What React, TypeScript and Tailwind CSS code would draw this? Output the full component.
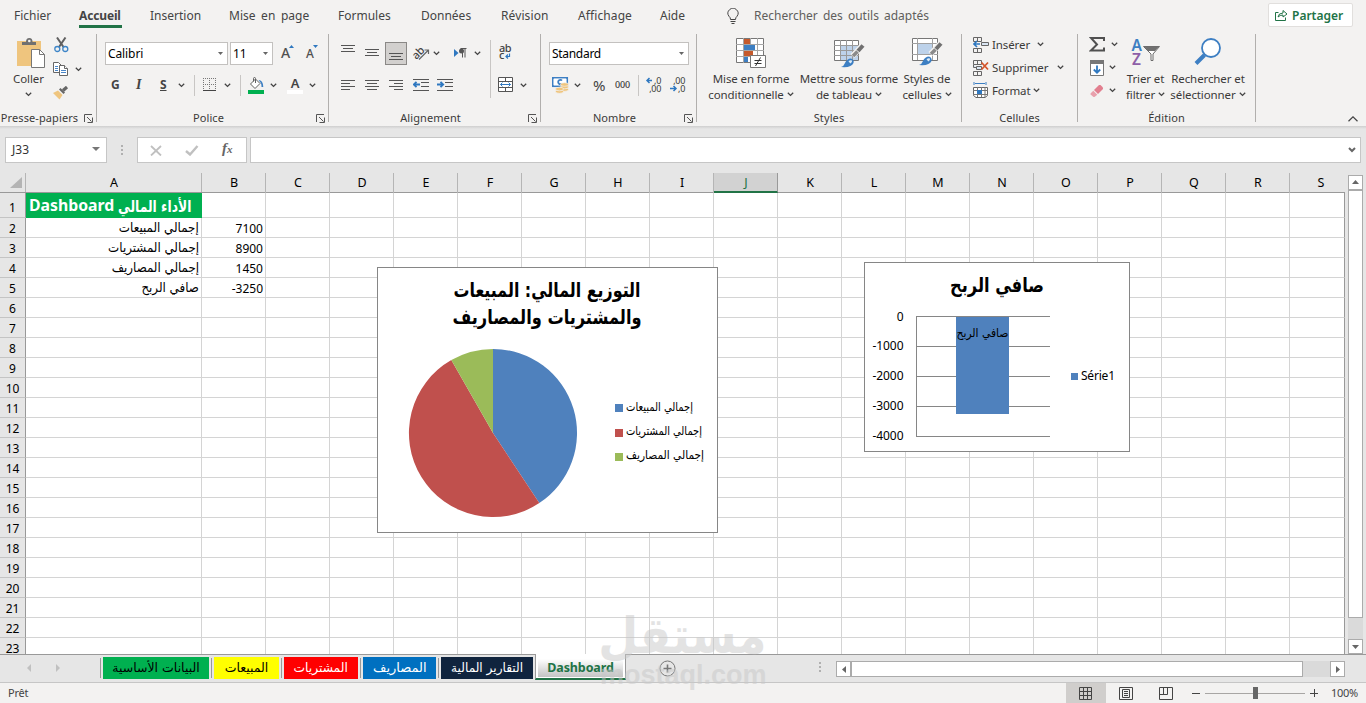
import type { ReactNode } from 'react';

const TABS = [
  { t: 'Insertion', c: 'w-[79px]' },
  { t: 'Mise en page', c: 'w-[109px] [word-spacing:2.5px]' },
  { t: 'Formules', c: 'w-[83px]' },
  { t: 'Données', c: 'w-[80px]' },
  { t: 'Révision', c: 'w-[77px] tracking-[0.1px]' },
  { t: 'Affichage', c: 'w-[82px] tracking-[0.1px]' },
  { t: 'Aide', c: 'w-[67px]' },
];

const COLS = ['B', 'C', 'D', 'E', 'F', 'G', 'H', 'I', 'J', 'K', 'L', 'M', 'N', 'O', 'P', 'Q', 'R', 'S'];

const ROWS = [
  { label: 'إجمالي المبيعات', value: '7100' },
  { label: 'إجمالي المشتريات', value: '8900' },
  { label: 'إجمالي المصاريف', value: '1450' },
  { label: 'صافي الربح', value: '-3250' },
];

const SHEETS = [
  { t: 'البيانات الأساسية', c: 'w-[106px] bg-[#00b050] text-black', s: '' },
  { t: 'المبيعات', c: 'w-[65px] bg-[#ffff00] text-black', s: '' },
  { t: 'المشتريات', c: 'w-[74px] bg-[#ff0000] text-white', s: 'scale-x-[0.98]' },
  { t: 'المصاريف', c: 'w-[73px] bg-[#0070c0] text-white', s: 'scale-x-[1.04]' },
  { t: 'التقارير المالية', c: 'w-[92px] bg-[#10243e] text-white', s: 'scale-x-[0.97]' },
];

function Chevron({ c = '' }: { c?: string }) {
  return (
    <svg className={`shrink-0 ${c}`} width="7" height="5" viewBox="0 0 7 5" fill="none" stroke="#444" strokeWidth="1.3">
      <path d="M0.8 0.8 3.5 3.4 6.2 0.8" />
    </svg>
  );
}

function Caret({ c = '' }: { c?: string }) {
  return (
    <svg className={`shrink-0 ${c}`} width="5" height="3" viewBox="0 0 5 3">
      <path d="M0 0H5L2.5 3Z" fill="#666" />
    </svg>
  );
}

function Launcher({ c = '' }: { c?: string }) {
  return (
    <svg className={`shrink-0 ${c}`} width="9" height="9" viewBox="0 0 9 9" fill="none" stroke="#555">
      <path d="M0.5 8V0.5H8M3 3 7.5 7.5M8.5 3.5V8.5H3.5" />
    </svg>
  );
}

function Sep() {
  return <div className="mt-[2px] h-[88px] w-px shrink-0 bg-[#b1afad]" />;
}

function Group({ label, width, launcher, children }: { label: string; width: string; launcher?: string; children: ReactNode }) {
  return (
    <div className={`flex shrink-0 flex-col ${width}`}>
      <div className="h-[78px]">{children}</div>
      <div className="flex h-4 items-center text-[11px] tracking-[0.1px]">
        <span className={`flex-1 whitespace-nowrap text-center ${launcher ? '-mr-[4px]' : ''}`}>{label}</span>
        {launcher && <Launcher c={launcher} />}
      </div>
    </div>
  );
}

function Lines({ xs, c = '' }: { xs: number[][]; c?: string }) {
  return (
    <svg className={`shrink-0 ${c}`} width="14" height="16" viewBox="0 0 14 16" stroke="#555" strokeWidth="1">
      {xs.map(([x1, x2, y], i) => (
        <path key={i} d={`M${x1} ${y + 0.5}H${x2}`} />
      ))}
    </svg>
  );
}

const LEFT = [[0, 14, 3], [0, 9, 6], [0, 14, 9], [0, 9, 12]];
const CENTER = [[0, 14, 3], [2, 12, 6], [0, 14, 9], [2, 12, 12]];
const RIGHT = [[0, 14, 3], [5, 14, 6], [0, 14, 9], [5, 14, 12]];
const THREE = [[0, 14, 3], [2, 12, 6], [0, 14, 9]];

function Indent({ out, c }: { out?: boolean; c: string }) {
  return (
    <svg className={`shrink-0 ${c}`} width="16" height="14" viewBox="0 0 16 14" fill="none" stroke="#555">
      <path d="M0 1.5H16M8 4.5H16M8 8.5H16M0 12.5H16" />
      <path d={out ? 'M7 6.5H1M3.5 3.8 0.8 6.5 3.5 9.2' : 'M0 6.5H6M3.5 3.8 6.2 6.5 3.5 9.2'} stroke="#2f78c0" strokeWidth="1.8" />
    </svg>
  );
}

function Clipboard() {
  return (
    <svg width="29" height="31" viewBox="0 0 29 31">
      <path d="M0 3H24V28H0Z" fill="#efc57e" />
      <path d="M5 7V4H9Q9 0 12.3 0T15.5 4H19V7Z" fill="#707070" />
      <circle cx="12.3" cy="3" r="1.3" fill="#f3f2f1" />
      <path d="M14.5 11.5H22.5L27.5 16.5V29.5H14.5Z" fill="#fff" stroke="#777" />
      <path d="M22.5 11.5V16.5H27.5" fill="none" stroke="#777" />
    </svg>
  );
}

function Scissors() {
  return (
    <svg width="15" height="16" viewBox="0 0 15 16" fill="none">
      <path d="M3 0.5 9.5 10M11.500 0.5 5 10" stroke="#606060" strokeWidth="2" />
      <circle cx="3.3" cy="12" r="2.5" stroke="#3d85c8" strokeWidth="1.3" />
      <circle cx="11.3" cy="12" r="2.5" stroke="#3d85c8" strokeWidth="1.3" />
    </svg>
  );
}

function Copy() {
  return (
    <svg width="15" height="14" viewBox="0 0 15 14" fill="#fff" stroke="#666">
      <path d="M0.5 0.5H5.5L8.5 3.5V10.5H0.5Z" />
      <path d="M2 4.5H5M2 6.5H5M2 8.5H5" stroke="#4a86c8" />
      <path d="M6.5 3.5H11.5L14.5 6.5V13.5H6.5Z" />
      <path d="M11.5 3.5V6.5H14.5" />
      <path d="M8 8.5H13M8 10.5H13" stroke="#4a86c8" />
    </svg>
  );
}

function Painter() {
  return (
    <svg width="16" height="14" viewBox="0 0 16 14">
      <path d="M0 7 5 4.5 9.5 9 6.5 13.5Z" fill="#efc57e" />
      <path d="M6 3.5 7.5 2 12 6.5 10.5 8Z" fill="#666" />
      <path d="M10 4.5 14 1" stroke="#666" strokeWidth="3.2" />
    </svg>
  );
}

function FontSize({ up, c }: { up?: boolean; c: string }) {
  return (
    <div className={`flex shrink-0 items-start font-medium text-[#505050] ${c}`}>
      <span className={up ? 'text-[14px] leading-[20px]' : 'text-[12px] leading-[21px]'}>A</span>
      <svg className="-ml-px mt-[2px]" width="5" height="4" viewBox="0 0 5 4">
        <path d={up ? 'M0 3H5L2.5 0Z' : 'M0 0H5L2.5 3Z'} fill="#2f78c0" />
      </svg>
    </div>
  );
}

function Bucket() {
  return (
    <svg width="16" height="17" viewBox="0 0 16 17">
      <path d="M2.5 7 7.5 2 12 6.5 7 11.5Z" fill="#fff" stroke="#606060" />
      <path d="M5.5 4.5V1.5Q5.5 0.5 6.5 0.5T7.5 1.5V6" fill="none" stroke="#606060" />
      <path d="M10.5 3Q15 3 15.3 10H13.5Q13.5 6 12 5Z" fill="#3d7fc3" />
      <path d="M0 13H16V17H0Z" fill="#00b050" />
    </svg>
  );
}

function BorderIcon() {
  return (
    <svg width="14" height="14" viewBox="0 0 14 14" fill="none" stroke="#777">
      <path d="M0.5 0V12M6.5 0V12M12.5 0V12M0 0.5H13M0 6.5H13" strokeDasharray="1 1" />
      <path d="M0 12.5H13" stroke="#444" />
    </svg>
  );
}

function Money() {
  return (
    <svg width="17" height="17" viewBox="0 0 17 17">
      <rect x="0.7" y="0.7" width="14.6" height="8.6" fill="#fff" stroke="#3d7fc3" strokeWidth="1.5" />
      <path d="M0 0H3L0 3ZM16 0H13L16 3ZM0 10H3L0 7Z" fill="#3d7fc3" />
      <path d="M10 3.500A2.200 2.200 0 1 0 10 6.500" fill="none" stroke="#3d7fc3" strokeWidth="1.800" />
      <g fill="#efc57e" stroke="#f3f2f1" strokeWidth="0.7">
        <ellipse cx="12.5" cy="12.5" rx="4" ry="1.8" />
        <ellipse cx="12.5" cy="10" rx="4" ry="1.8" />
        <ellipse cx="12.5" cy="7.5" rx="4" ry="1.8" />
        <ellipse cx="7.5" cy="14.5" rx="4" ry="1.8" />
        <ellipse cx="7.5" cy="12" rx="4" ry="1.8" />
      </g>
    </svg>
  );
}

function Decimals({ less }: { less?: boolean }) {
  return (
    <svg className="shrink-0 overflow-visible" width="15" height="16" viewBox="0 0 15 16">
      <g fontSize="9" fill="#3b3a39" textAnchor="end" letterSpacing="-0.3">
        <text x="15" y="7">{less ? ',00' : ',0'}</text>
        <text x="15" y="15">{less ? ',0' : ',00'}</text>
      </g>
      <path
        transform={less ? 'translate(0 8)' : undefined}
        d={less ? 'M0 3.5H6M3.5 1 6 3.5 3.5 6' : 'M6 3.5H1M3.5 1 1 3.5 3.5 6'}
        fill="none"
        stroke="#2f78c0"
        strokeWidth="1.5"
      />
    </svg>
  );
}

function Brush() {
  return (
    <g>
      <path d="M29 7 18.5 18" stroke="#f3f2f1" strokeWidth="5.5" />
      <path d="M29 7.5 24 13" stroke="#707070" strokeWidth="4" />
      <path d="M23.5 13.5 19 18" stroke="#8a8a8a" strokeWidth="3.6" />
      <path d="M7 29Q10 28 11 25 13 20.5 17 20.5 20.5 22 19.5 25 17.5 30 7 29Z" fill="#3d7fc3" />
      <path d="M14.5 23.5Q16 21.5 18 22.5 18.5 24 16.5 25.5Z" fill="#dcebf7" />
    </g>
  );
}

function Conditional() {
  return (
    <svg width="31" height="31" viewBox="0 0 31 31">
      <path d="M0.5 0.5H27.5V24.5H0.5Z" fill="#fff" stroke="#777" />
      <path d="M0 6.5H28M0 12.5H28M0 18.5H28M7.5 0V25M14.5 0V25M21.5 0V25" stroke="#a6a6a6" />
      <path d="M8 1H14V6H8ZM8 13H17V18H8Z" fill="#c55a2c" />
      <path d="M8 7H19V12H8ZM8 19H12V24H8Z" fill="#3d7fc3" />
      <path d="M14.5 17.5H29.5V29.5H14.5Z" fill="#fff" stroke="#777" />
      <path d="M18.5 22.5H25.5M18.5 25.5H25.5M24.5 19.5 19.5 28" stroke="#333" />
    </svg>
  );
}

function TableStyle() {
  return (
    <svg width="31" height="31" viewBox="0 0 31 31">
      <path d="M0.5 2.5H24.5V22.5H0.5Z" fill="#fff" stroke="#777" />
      <path d="M6.5 8H24V22H6.5Z" fill="#bdd2ea" />
      <path d="M0 7.5H25M0 12.5H25M0 17.5H25M6.5 2V22M12.5 2V22M18.5 2V22" stroke="#999" />
      <Brush />
    </svg>
  );
}

function CellStyle() {
  return (
    <svg width="31" height="31" viewBox="0 0 31 31">
      <path d="M0.5 0.5H25.5V22.5H0.5Z" fill="#fff" stroke="#777" />
      <path d="M6 6H20V16H6Z" fill="#bdd2ea" />
      <path d="M0 5.5H26M0 16.5H26M5.5 0V22M20.5 0V22" stroke="#a0a0a0" />
      <g transform="translate(0 -2)">
        <Brush />
      </g>
    </svg>
  );
}

function CellIcon({ kind }: { kind: string }) {
  if (kind === 'format') {
    return (
      <svg width="16" height="17" viewBox="0 0 16 17" fill="none">
        <path d="M1 0V3M13 0V3M2 1.5H12" stroke="#3d7fc3" />
        <path d="M0.5 5.5H14.5V13.5L12 15.5H3L0.5 13.5Z" fill="#fff" stroke="#666" />
        <path d="M0 8.5H15M0 12.5H15M4.5 5V15M8.5 5V15M12 5V15" stroke="#777" />
        <path d="M4 8H9V12H4Z" fill="#2f78c0" />
      </svg>
    );
  }
  return (
    <svg width="16" height="16" viewBox="0 0 16 16" fill="none" stroke="#666">
      <path d="M0.5 4.5V0.5H8.5V4.5H0.5M4.5 0V4.5M0.5 11.5V15.5H8.5V11.5H0.5M4.5 11.5V15.5" />
      {kind === 'insert' ? (
        <>
          <path d="M8.5 5.5H15.5V8.5H8.5Z" fill="#d9e5f2" />
          <path d="M7 7H1M4 4 1 7 4 10" stroke="#2f78c0" strokeWidth="1.6" />
        </>
      ) : (
        <>
          <path d="M0.500 4.500V7.500H3.500M3.5 6.5H8.5V9.5H3.5Z" fill="#d9e5f2" />
          <path d="M8.5 2.5 15 9.5M15 2.5 8.5 9.5" stroke="#d4552b" strokeWidth="1.8" />
        </>
      )}
    </svg>
  );
}

function BigButton({ icon, l1, l2, c }: { icon: ReactNode; l1: string; l2: string; c: string }) {
  return (
    <div className={`flex shrink-0 flex-col items-center pt-[6px] ${c}`}>
      <div className="h-[32px]">{icon}</div>
      <div className="h-4 whitespace-nowrap leading-[17px]">{l1}</div>
      <div className="flex h-4 items-center gap-[3px] whitespace-nowrap leading-[17px]">
        {l2}
        <Chevron />
      </div>
    </div>
  );
}

function Ribbon() {
  return (
    <div className="flex h-[94px] text-[11.5px] leading-4 tracking-[-0.1px] text-[#3b3a39]">
      <Group label="Presse-papiers" width="w-[96px]" launcher="ml-[9px] mr-[3px]">
        <div className="flex">
          <div className="flex w-[53px] flex-col pt-[6px]">
            <div className="h-[33px] pl-[17px]"><Clipboard /></div>
            <div className="h-4 pl-[13px]">Coller</div>
            <Chevron c="ml-[25px] mt-[5px]" />
          </div>
          <div className="flex flex-col pt-[5px]">
            <div className="h-[25px] pl-px"><Scissors /></div>
            <div className="flex h-[24px] items-start"><Copy /><Chevron c="ml-[7px] mt-[5px]" /></div>
            <Painter />
          </div>
        </div>
      </Group>
      <Sep />
      <Group label="Police" width="w-[231px]" launcher="mr-[3px]">
        <div className="flex h-[33px] items-end pl-[8px]">
          <div className="flex h-[23px] w-[123px] items-center border border-[#c3c1bf] bg-white px-[2px] text-[12px] text-black">
            <span className="flex-1">Calibri</span><Caret c="mr-[2px]" />
          </div>
          <div className="ml-[2px] flex h-[23px] w-[43px] items-center border border-[#c3c1bf] bg-white px-[2px] text-[12px] text-black">
            <span className="flex-1">11</span><Caret c="mr-[2px]" />
          </div>
          <FontSize up c="ml-[8px] h-[22px] w-[25px]" />
          <FontSize c="h-[22px]" />
        </div>
        <div className="flex h-[40px] items-center pl-[14px] text-[12px] text-[#444]">
          <span className="w-[25px] font-bold">G</span>
          <span className="w-[24px] font-['Liberation_Serif',serif] text-[14px] font-bold italic">I</span>
          <span className="w-[18px] font-bold underline">S</span>
          <Chevron />
          <div className="ml-[9px] h-[21px] w-px bg-[#c8c6c4]" />
          <div className="ml-[8px]"><BorderIcon /></div>
          <Chevron c="ml-[7px]" />
          <div className="ml-[9px] h-[21px] w-px bg-[#c8c6c4]" />
          <div className="ml-[7px]"><Bucket /></div>
          <Chevron c="ml-[6px]" />
          <div className="ml-[10px] flex w-4 flex-col items-center text-[13px] font-semibold leading-[13px]">
            A<div className="h-[4px] w-4 bg-white" />
          </div>
          <Chevron c="ml-[6px]" />
        </div>
      </Group>
      <Sep />
      <Group label="Alignement" width="w-[211px]" launcher="mr-[3px]">
        <div className="flex">
          <div className="w-[161px]">
            <div className="flex h-[33px] items-end pl-[12px]">
              <Lines xs={THREE} c="mb-[7px]" />
              <Lines xs={THREE} c="ml-[10px] mb-[3px]" />
              <div className="ml-[6px] flex h-[23px] w-[22px] items-end justify-center border border-[#8a8886] bg-[#d2d0ce]"><Lines xs={THREE} c="-mb-[2px]" /></div>
              <svg className="mb-[4px] ml-[6px] shrink-0 overflow-visible" width="17" height="17" viewBox="0 0 17 17">
                <text x="-1" y="12" fontSize="11" fontWeight="500" fill="#444" transform="rotate(-45 6 9)">ab</text>
                <path d="M6 15.5 15 6.5M11.5 6H15.5V10" stroke="#666" strokeWidth="1.2" fill="none" />
              </svg>
              <Chevron c="mb-[9px] ml-[3px]" />
              <svg className="mb-[6px] ml-[14px] shrink-0" width="13" height="12" viewBox="0 0 13 12">
                <path d="M0 2 4.5 6 0 10Z" fill="#2f78c0" />
                <path d="M8.5 10.5V2M11 10.5V2M6.5 1.5H12.5" stroke="#555" fill="none" />
                <circle cx="7.5" cy="4" r="2.5" fill="#555" />
              </svg>
              <Chevron c="mb-[9px] ml-[7px]" />
            </div>
            <div className="flex h-[40px] items-center pl-[12px]">
              <Lines xs={LEFT} />
              <Lines xs={CENTER} c="ml-[10px]" />
              <Lines xs={RIGHT} c="ml-[10px]" />
              <Indent out c="ml-[10px]" />
              <Indent c="ml-[8px]" />
            </div>
          </div>
          <div className="mt-[8px] h-[58px] w-px bg-[#c8c6c4]" />
          <div className="pl-[7px] pt-[12px]">
            <svg className="mb-[17px] ml-px overflow-visible" width="14" height="16" viewBox="0 0 14 16">
              <g fontSize="11" fontWeight="500" fill="#444">
                <text x="0" y="7.5" textLength="12.500">ab</text>
                <text x="0" y="15">c</text>
              </g>
              <path d="M10.500 9.500V12.500H7.500M9 10.500 7 12.500 9 14.500" fill="none" stroke="#2f78c0" strokeWidth="1.2" />
            </svg>
            <div className="flex items-center">
              <svg width="16" height="16" viewBox="0 0 16 16" fill="#fff" stroke="#555">
                <path d="M0.5 0.5H14.5V14.5H0.5ZM0.5 4.5H14.5M0.5 10.5H14.5M7.5 0V4.5M7.5 10.5V15" />
                <path d="M2.5 7.5H12.5M4.5 5.5 2.5 7.5 4.5 9.5M10.5 5.5 12.5 7.5 10.5 9.5" stroke="#2f78c0" fill="none" />
              </svg>
              <Chevron c="ml-[6px]" />
            </div>
          </div>
        </div>
      </Group>
      <Sep />
      <Group label="Nombre" width="w-[155px]" launcher="mr-[3px]">
        <div className="flex h-[33px] items-end pl-[8px]">
          <div className="flex h-[23px] w-[140px] items-center border border-[#c3c1bf] bg-white px-[2px] text-[12px] text-black">
            <span className="flex-1 tracking-[-0.3px]">Standard</span><Caret c="mr-[2px]" />
          </div>
        </div>
        <div className="flex h-[40px] items-center pl-[11px]">
          <Money />
          <Chevron c="ml-[5px]" />
          <span className="ml-[12px] w-[22px] text-[15px] text-[#444]">%</span>
          <span className="w-[23px] text-[9px] font-medium">000</span>
          <div className="h-[21px] w-px bg-[#c8c6c4]" />
          <div className="ml-[7px] flex gap-[9px]"><Decimals /><Decimals less /></div>
        </div>
      </Group>
      <Sep />
      <Group label="Styles" width="w-[264px]">
        <div className="flex">
          <BigButton icon={<Conditional />} l1="Mise en forme" l2="conditionnelle" c="ml-[5px] w-[98px]" />
          <BigButton icon={<TableStyle />} l1="Mettre sous forme" l2="de tableau" c="w-[98px]" />
          <BigButton icon={<CellStyle />} l1="Styles de" l2="cellules" c="w-[58px]" />
        </div>
      </Group>
      <Sep />
      <Group label="Cellules" width="w-[115px]">
        <div className="flex flex-col pl-[11px] pt-px">
          <div className="flex h-[23px] items-center"><CellIcon kind="insert" /><span className="ml-[3px] w-[45px]">Insérer</span><Chevron /></div>
          <div className="flex h-[23px] items-center"><CellIcon kind="delete" /><span className="ml-[3px] w-[65px]">Supprimer</span><Chevron /></div>
          <div className="flex h-[23px] items-center"><CellIcon kind="format" /><span className="ml-[3px] w-[41px]">Format</span><Chevron /></div>
        </div>
      </Group>
      <Sep />
      <Group label="Édition" width="w-[177px]">
        <div className="flex">
          <div className="w-[45px] pl-[11px]">
            <div className="flex h-[24px] items-center">
              <svg width="16" height="15" viewBox="0 0 16 15" fill="none" stroke="#505050" strokeWidth="2">
                <path d="M15 4V1H2L8 7.5 2 13.5H15V10.5" />
              </svg>
              <Chevron c="ml-[6px]" />
            </div>
            <div className="flex h-[23px] items-center">
              <svg className="ml-px" width="14" height="16" viewBox="0 0 14 16">
                <path d="M0.5 0.5H13.5V15.5H0.5Z" fill="#fff" stroke="#777" />
                <path d="M0 0H14V4H0Z" fill="#777" />
                <path d="M7 5.5V12.5M3.8 9.5 7 12.7 10.2 9.5" fill="none" stroke="#2f78c0" strokeWidth="1.8" />
              </svg>
              <Chevron c="ml-[5px]" />
            </div>
            <div className="flex h-[23px] items-center">
              <svg className="ml-px" width="14" height="14" viewBox="0 0 14 14">
                <path d="M4 6 9 1H10.5L13 3.5V5L8 10Z" fill="#e27f8f" />
                <path d="M3.3 6.7 0.5 9.5V10.5L3.5 13H4.5L7.3 10.7Z" fill="#e8a0ac" />
              </svg>
              <Chevron c="ml-[5px]" />
            </div>
          </div>
          <BigButton
            l1="Trier et"
            l2="filtrer"
            c="w-[45px]"
            icon={
              <svg className="overflow-visible" width="30" height="30" viewBox="0 0 30 30">
                <text x="0.500" y="13" fontSize="15.500" fontWeight="600" fill="#3d7fc3">A</text>
                <text x="1" y="27" fontSize="15.500" fontWeight="600" fill="#8e5fa8">Z</text>
                <path d="M12.5 8.5H28.5L22 16V22.5H20V16Z" fill="#fff" stroke="#6b6b6b" />
                <path d="M13 8.5H28L24 13H17Z" fill="#707070" />
              </svg>
            }
          />
          <BigButton
            l1="Rechercher et"
            l2="sélectionner"
            c="w-[80px]"
            icon={
              <svg width="28" height="28" viewBox="0 0 28 28" fill="none" stroke="#3d7fc3">
                <circle cx="17" cy="10" r="9" fill="#fff" strokeWidth="1.8" />
                <path d="M10.5 17 2 25.5" strokeWidth="4" />
              </svg>
            }
          />
        </div>
      </Group>
      <Sep />
      <svg className="ml-[92px] mt-[84px]" width="10" height="6" viewBox="0 0 10 6" fill="none" stroke="#444" strokeWidth="1.2">
        <path d="M0.5 5.2 5 0.8 9.5 5.2" />
      </svg>
    </div>
  );
}

function FormulaBar() {
  return (
    <div className="flex h-[44px] items-start bg-[#e6e6e6] pt-[8px] text-[12px] text-[#333]">
      <div className="ml-[5px] flex h-[26px] w-[102px] items-center border border-[#c6c6c6] bg-white pl-[6px] pr-[6px]">
        <span className="flex-1">J33</span>
        <svg className="mb-[2px]" width="8" height="4" viewBox="0 0 8 4"><path d="M0 0H8L4 4Z" fill="#777" /></svg>
      </div>
      <div className="ml-[14px] mt-[8px] flex w-[2px] flex-col gap-[2px]">
        <div className="size-[2px] bg-[#b0b0b0]" />
        <div className="size-[2px] bg-[#b0b0b0]" />
        <div className="size-[2px] bg-[#b0b0b0]" />
      </div>
      <div className="ml-[14px] flex h-[26px] w-[110px] items-center border border-[#c6c6c6] bg-white">
        <svg className="ml-[12px]" width="12" height="11" viewBox="0 0 12 11" stroke="#c0c0c0" strokeWidth="1.8"><path d="M1 1 11 10.5M11 1 1 10.5" /></svg>
        <svg className="ml-[23px]" width="14" height="11" viewBox="0 0 14 11" fill="none" stroke="#c0c0c0" strokeWidth="2.4"><path d="M1 6 5 9.5 12.5 1" /></svg>
        <span className="-mt-[3px] ml-[23px] font-['Liberation_Serif',serif] text-[15px] font-bold italic leading-none text-[#666]">f<span className="text-[11px]">x</span></span>
      </div>
      <div className="ml-[3px] flex h-[26px] w-[1111px] items-center justify-end border border-[#c6c6c6] bg-white pr-[4px]">
        <svg width="8" height="6" viewBox="0 0 8 6" fill="none" stroke="#666" strokeWidth="2"><path d="M1 1 4 4 7 1" /></svg>
      </div>
    </div>
  );
}

function PieChartBox() {
  return (
    <svg className="absolute left-[377px] top-[94px]" width="341" height="266" viewBox="0 0 341 266" fontFamily="'DejaVu Sans', sans-serif">
      <rect x="0.5" y="0.5" width="340" height="265" fill="#fff" stroke="#868686" />
      <text x="170" y="30" textAnchor="middle" fontSize="20" fontWeight="700" direction="rtl" textLength="187" lengthAdjust="spacingAndGlyphs">التوزيع المالي: المبيعات</text>
      <text x="170" y="57" textAnchor="middle" fontSize="20" fontWeight="700" direction="rtl" textLength="189" lengthAdjust="spacingAndGlyphs">والمشتريات والمصاريف</text>
      <path d="M116 166V82A84 84 0 0 1 162.3 236.1Z" fill="#4f81bd" />
      <path d="M116 166 162.3 236.1A84 84 0 1 1 74.3 93.1Z" fill="#c0504d" />
      <path d="M116 166 74.3 93.1A84 84 0 0 1 116 82Z" fill="#9bbb59" />
      <path d="M238 137H246V145H238Z" fill="#4f81bd" />
      <path d="M238 162H246V170H238Z" fill="#c0504d" />
      <path d="M238 186H246V194H238Z" fill="#9bbb59" />
      <text x="282.5" y="144" textAnchor="middle" fontSize="12" direction="rtl" textLength="67" lengthAdjust="spacingAndGlyphs">إجمالي المبيعات</text>
      <text x="287" y="168" textAnchor="middle" fontSize="12" direction="rtl" textLength="76" lengthAdjust="spacingAndGlyphs">إجمالي المشتريات</text>
      <text x="288" y="192" textAnchor="middle" fontSize="12" direction="rtl" textLength="78" lengthAdjust="spacingAndGlyphs">إجمالي المصاريف</text>
    </svg>
  );
}

function BarChartBox() {
  return (
    <svg className="absolute left-[864px] top-[89px]" width="266" height="190" viewBox="0 0 266 190" fontFamily="'DejaVu Sans', sans-serif">
      <rect x="0.5" y="0.5" width="265" height="189" fill="#fff" stroke="#868686" />
      <text x="133" y="30" textAnchor="middle" fontSize="20" fontWeight="700" direction="rtl" textLength="94" lengthAdjust="spacingAndGlyphs">صافي الربح</text>
      <path d="M52.5 54V175M52 54.5H186M52 84.5H186M52 114.5H186M52 144.5H186M52 174.5H186" stroke="#868686" />
      <path d="M92 55H145V152H92Z" fill="#4f81bd" />
      <text x="118.5" y="75" textAnchor="middle" fontSize="12" direction="rtl" textLength="52" lengthAdjust="spacingAndGlyphs">صافي الربح</text>
      <g fontFamily="'Noto Sans', sans-serif" fontSize="12" textAnchor="end">
        <text x="39.5" y="59">0</text>
        <text x="39.5" y="88" textLength="31">-1000</text>
        <text x="39.5" y="118" textLength="31">-2000</text>
        <text x="39.5" y="148" textLength="31">-3000</text>
        <text x="39.5" y="178" textLength="31">-4000</text>
        <text x="251" y="118" textLength="34">Série1</text>
      </g>
      <path d="M207 111H214V118H207Z" fill="#4f81bd" />
    </svg>
  );
}

function Sheet() {
  return (
    <div className="relative flex h-[481px] overflow-hidden bg-[#e6e6e6] text-[12.5px] text-black">
      <div className="w-[1345px]">
        <div className="flex h-[20px] border-b border-[#999]">
          <div className="flex w-[26px] items-end justify-end border-r border-[#b5b5b5] pb-[4px] pr-[3px]">
            <svg width="12" height="11" viewBox="0 0 12 11"><path d="M12 0V11H0Z" fill="#b4b4b4" /></svg>
          </div>
          <div className="w-[176px] border-r border-[#b5b5b5] pl-px text-center leading-[19px]">A</div>
          {COLS.map((c) => (
            <div
              key={c}
              className={`h-[20px] shrink-0 text-center leading-[19px] ${c === 'S' ? 'w-[55px] pl-[7px]' : 'w-[64px] border-r pl-px'} ${c === 'J' ? 'border-b-2 border-[#217346] border-r-[#999] bg-[#d2d2d2] text-[#217346]' : 'border-[#b5b5b5]'}`}
            >
              {c}
            </div>
          ))}
        </div>
        {Array.from({ length: 23 }, (_, r) => {
          const row = ROWS[r - 1];
          return (
            <div key={r} className={`flex ${r === 0 ? 'h-[25px]' : 'h-[20px]'}`}>
              <div className={`w-[26px] shrink-0 border-b border-r border-b-[#c4c4c4] border-r-[#999] text-center text-[12px] ${r === 0 ? 'leading-[29px]' : 'leading-[21px]'}`}>{r + 1}</div>
              {r === 0 ? (
                <div className="flex w-[176px] shrink-0 items-center bg-[#00b050] pl-[3px] text-[16px] font-bold leading-none text-white">
                  <span className="w-[89px] text-[15.8px]">Dashboard</span>
                  <span className="mt-[2px] w-[74px] origin-left scale-x-[0.77] whitespace-nowrap font-['DejaVu_Sans',sans-serif] text-[16px]">الأداء المالي</span>
                </div>
              ) : (
                <div className="flex w-[176px] shrink-0 justify-end border-b border-r border-[#d4d4d4] bg-white pr-[2px]">
                  {row && <span className="origin-right scale-x-[0.9] whitespace-nowrap font-['DejaVu_Sans',sans-serif] text-[13.2px] leading-[20px]">{row.label}</span>}
                </div>
              )}
              {COLS.map((c) => (
                <div key={c} className={`shrink-0 border-b border-r border-[#d4d4d4] bg-white ${c === 'S' ? 'w-[55px] border-r-[#999]' : 'w-[64px]'}`}>
                  {c === 'B' && row && <div className="pr-[2px] text-right text-[12px] leading-[21px]">{row.value}</div>}
                </div>
              ))}
            </div>
          );
        })}
      </div>
      <div className="ml-[3px] mt-[2px] flex w-[15px] flex-col">
        <div className="flex h-[15px] items-center justify-center border border-[#ababab] bg-white">
          <svg width="7" height="4" viewBox="0 0 7 4"><path d="M0 4H7L3.5 0Z" fill="#666" /></svg>
        </div>
        <div className="h-[429px] border border-[#ababab] bg-white" />
        <div className="h-[21px] bg-[#dadada]" />
        <div className="flex h-[15px] items-center justify-center border border-[#ababab] bg-white">
          <svg width="7" height="4" viewBox="0 0 7 4"><path d="M0 0H7L3.5 4Z" fill="#666" /></svg>
        </div>
      </div>
      <PieChartBox />
      <BarChartBox />
    </div>
  );
}

function SheetTabs() {
  return (
    <div className="flex h-[29px] border-b border-t border-b-[#c6c6c6] border-t-[#999] bg-[#e6e6e6]">
      <div className="flex w-[100px] items-center pb-px pl-[27px]">
        <svg width="36" height="8" viewBox="0 0 36 8"><path d="M4 0V8L0 4ZM29 0V8L33 4Z" fill="#c0c0c0" /></svg>
      </div>
      {SHEETS.map((s) => (
        <div key={s.t} className="flex shrink-0">
          <div className="mt-[3px] h-[20px] w-px bg-[#999]" />
          <div className={`ml-[2px] mr-[2px] mt-[2px] flex h-[22px] items-center justify-center font-['DejaVu_Sans',sans-serif] text-[12.5px] leading-none ${s.c}`}>
            <span className={`whitespace-nowrap ${s.s}`}>{s.t}</span>
          </div>
        </div>
      ))}
      <div className="-mt-px flex h-[26px] w-[91px] shrink-0 items-end border-b-2 border-l border-r border-b-[#217346] border-l-[#999] border-r-[#999] bg-white px-[2px] pb-px">
        <div className="h-[18px] flex-1 bg-gradient-to-b from-white to-[#c4c4c4] text-center text-[12.5px] font-bold leading-[18px] tracking-[-0.1px] text-[#217346]">Dashboard</div>
      </div>
      <svg className="ml-[33px] mt-[5px]" width="17" height="17" viewBox="0 0 17 17" fill="none" stroke="#777">
        <circle cx="8.5" cy="8.5" r="7.5" />
        <path d="M8.5 4.5V12.5M4.5 8.5H12.5" strokeWidth="1.6" />
      </svg>
      <div className="ml-auto mr-[15px] mt-[7px] flex flex-col gap-[2px]">
        <div className="size-[2px] bg-[#b0b0b0]" />
        <div className="size-[2px] bg-[#b0b0b0]" />
        <div className="size-[2px] bg-[#b0b0b0]" />
      </div>
      <div className="mr-[21px] mt-[6px] flex h-[16px] w-[509px] bg-[#dadada]">
        <div className="flex w-[15px] items-center justify-center border border-[#ababab] bg-white">
          <svg width="4" height="7" viewBox="0 0 4 7"><path d="M4 0V7L0 3.5Z" fill="#666" /></svg>
        </div>
        <div className="w-[452px] border border-[#ababab] bg-white" />
        <div className="ml-auto flex w-[15px] items-center justify-center border border-[#ababab] bg-white">
          <svg width="4" height="7" viewBox="0 0 4 7"><path d="M0 0V7L4 3.5Z" fill="#666" /></svg>
        </div>
      </div>
    </div>
  );
}

function StatusBar() {
  return (
    <div className="flex h-[20px] items-center bg-[#f3f2f1] text-[11px] text-[#444]">
      <span className="ml-[8px] w-[1058px] tracking-[-0.2px]">Prêt</span>
      <div className="flex h-full w-[40px] items-center justify-center bg-[#d0cecc] pr-px">
        <svg width="13" height="13" viewBox="0 0 13 13" fill="none" stroke="#444"><path d="M0.5 0.5H12.5V12.5H0.5ZM4.5 0V13M8.5 0V13M0 4.5H13M0 8.5H13" /></svg>
      </div>
      <svg className="ml-[13px]" width="14" height="13" viewBox="0 0 14 13" fill="none" stroke="#444">
        <path d="M0.5 0.5H13.5V12.5H0.5ZM3.5 2.5H10.5V10.5H3.5ZM5 4.5H9M5 6.5H9M5 8.5H9" />
      </svg>
      <svg className="ml-[26px]" width="14" height="13" viewBox="0 0 14 13" fill="none" stroke="#444">
        <path d="M0.5 0.5H13.5V12.5H0.5ZM0.5 7.5H8.5V0.5M4.5 0.5V7.5" />
      </svg>
      <div className="ml-[19px] h-px w-[8px] bg-[#444]" />
      <div className="ml-[5px] flex w-[100px] items-center">
        <div className="h-px w-[48px] bg-[#a8a6a4]" />
        <div className="h-[12px] w-[5px] bg-[#666]" />
        <div className="h-px flex-1 bg-[#a8a6a4]" />
      </div>
      <svg className="ml-[5px]" width="8" height="8" viewBox="0 0 8 8" stroke="#444"><path d="M0 4.5H8M4.5 0V8" /></svg>
      <span className="ml-[13px] tracking-[-0.3px]">100%</span>
    </div>
  );
}

export default function App() {
  return (
    <main className="relative h-[703px] w-[1366px] overflow-hidden bg-[#f3f2f1] font-['Noto_Sans','DejaVu_Sans',sans-serif]">
      <header className="flex h-[32px] items-start whitespace-nowrap text-[12px] leading-[31px] text-[#444]">
        <div className="ml-[14px] w-[65px]">Fichier</div>
        <div className="flex w-[71px]">
          <div className="h-[28px] w-[43px] border-b-[3px] border-[#217346] font-bold tracking-[-0.15px]">Accueil</div>
        </div>
        {TABS.map((tab) => (
          <div key={tab.t} className={tab.c}>{tab.t}</div>
        ))}
        <svg className="mt-[8px]" width="12" height="17" viewBox="0 0 12 17" fill="none" stroke="#444">
          <path d="M3.5 11.5Q3.5 9.5 2 8.3A5 5 0 1 1 10 8.3Q8.5 9.5 8.5 11.5ZM3.5 13.5H8.5M4.5 15.5H7.5" />
        </svg>
        <div className="ml-[15px] text-[#605e5c] [word-spacing:2px]">Rechercher des outils adaptés</div>
        <div className="ml-auto mr-[13px] mt-[3px] flex h-[24px] w-[85px] items-center rounded-[2px] border border-[#e1dfdd] bg-white pl-[6px] font-semibold text-[#217346]">
          <svg width="13" height="12" viewBox="0 0 13 12" fill="none" stroke="#217346">
            <path d="M3.5 3.5H0.5V11.5H10.5V8.5M3 8Q3.5 4 8 4V1.5L12 5 8 8V6Q5 6 3 8Z" />
          </svg>
          <span className="ml-[4px]">Partager</span>
        </div>
      </header>
      <Ribbon />
      <div className="h-[3px] bg-gradient-to-b from-[#cfcfcf] to-[#e6e6e6]" />
      <FormulaBar />
      <Sheet />
      <SheetTabs />
      <StatusBar />
      <div className="pointer-events-none absolute left-[600px] top-[608px] w-[165px] text-center text-[#c8c8c8] opacity-50">
        <div className="flex h-[55px] items-center justify-center">
          <span className="scale-x-[0.92] whitespace-nowrap font-['DejaVu_Sans',sans-serif] text-[50px] font-bold leading-none">مستقل</span>
        </div>
        <div className="whitespace-nowrap font-['Liberation_Sans',sans-serif] text-[27px] font-bold leading-[24px]">mostaql.com</div>
      </div>
    </main>
  );
}
